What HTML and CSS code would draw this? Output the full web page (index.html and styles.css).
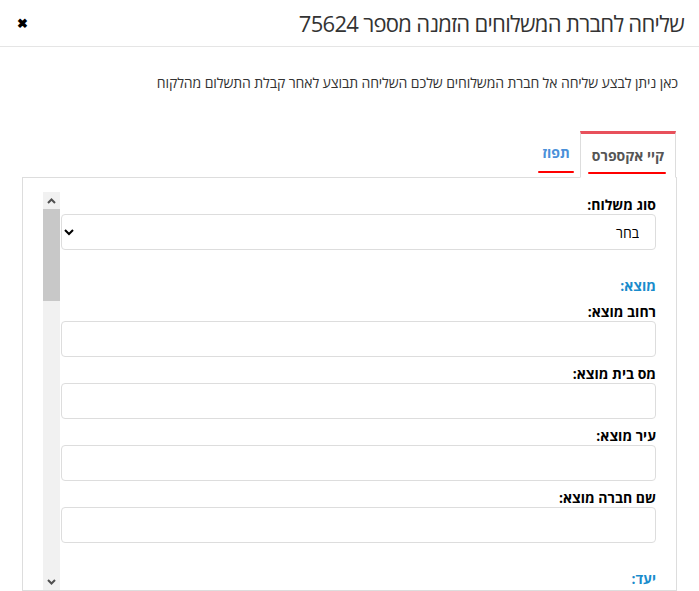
FILE: index.html
```html
<!DOCTYPE html>
<html lang="he" dir="rtl">
<head>
  <meta charset="UTF-8" />
  <meta name="viewport" content="width=device-width, initial-scale=1.0" />
  <title>שליחה לחברת המשלוחים</title>
  <link rel="stylesheet" href="styles.css">
</head>
<body>
  <div class="modal">
    <!-- כותרת -->
    <div class="modal-header">
      <h4 class="modal-title">שליחה לחברת המשלוחים הזמנה מספר 75624</h4>
      <button class="close" type="button">&#10006;</button>
    </div>

    <div class="modal-body">
      <p class="desc">כאן ניתן לבצע שליחה אל חברת המשלוחים שלכם השליחה תבוצע לאחר קבלת התשלום מהלקוח</p>

      <!-- טאבים -->
      <ul class="tabs">
        <li class="tab active"><span class="mark">קיי אקספרס</span></li>
        <li class="tab"><span class="mark mark-short">תפוז</span></li>
      </ul>

      <div class="tab-panel">
        <div class="scroll-box">
          <form class="ship-form">
            <div class="field">
              <label>סוג משלוח:</label>
              <select class="input">
                <option>בחר</option>
              </select>
            </div>

            <h5 class="section">מוצא:</h5>
            <div class="field">
              <label>רחוב מוצא:</label>
              <input class="input" type="text" />
            </div>
            <div class="field">
              <label>מס בית מוצא:</label>
              <input class="input" type="text" />
            </div>
            <div class="field">
              <label>עיר מוצא:</label>
              <input class="input" type="text" />
            </div>
            <div class="field">
              <label>שם חברה מוצא:</label>
              <input class="input" type="text" />
            </div>

            <h5 class="section">יעד:</h5>
          </form>

          <!-- פס גלילה -->
          <div class="scrollbar">
            <div class="sb-btn">
              <svg width="9" height="6" viewBox="0 0 9 6"><path d="M1 5l3.5-3.5L8 5" fill="none" stroke="#505050" stroke-width="2"/></svg>
            </div>
            <div class="sb-thumb"></div>
            <div class="sb-track"></div>
            <div class="sb-btn">
              <svg width="9" height="6" viewBox="0 0 9 6"><path d="M1 1l3.5 3.5L8 1" fill="none" stroke="#505050" stroke-width="2"/></svg>
            </div>
          </div>
        </div>
      </div>
    </div>
  </div>
</body>
</html>
```

FILE: styles.css
```css
html, body {
  margin: 0;
  height: 100%;
  overflow: hidden;
}

body {
  direction: rtl;
  font-family: "Open Sans", Arial, sans-serif;
  color: #333;
  background: #fff;
}

.modal-header {
  height: 46px;
  border-bottom: 1px solid #e5e5e5;
  display: flex;
  align-items: center;
  justify-content: space-between;
  padding: 0 15px 0 17px;
}

.modal-title {
  margin: 0;
  font-size: 22px;
  font-weight: normal;
  letter-spacing: -0.7px;
  color: #333;
}

.close {
  border: none;
  background: none;
  padding: 0;
  font-size: 13px;
  font-weight: bold;
  color: #000;
  cursor: pointer;
}

.modal-body {
  padding: 26px 22px 0 22px;
}

.desc {
  margin: 0 -1px 39px 0;
  font-size: 14px;
  letter-spacing: -0.1px;
  color: #333;
}

.tabs {
  list-style: none;
  margin: 0;
  padding: 0;
  display: flex;
  align-items: flex-end;
  height: 46px;
}

.tab {
  padding: 0 10px;
  font-size: 14px;
  font-weight: bold;
  color: #4a90d9;
  height: 20px;
  margin-bottom: 14px;
}

.tab.active {
  margin-right: 1px;
  margin-bottom: -1px;
  height: 43px;
  padding: 0 11px;
  border: 1px solid #ddd;
  border-top: 3px solid #e8505b;
  border-bottom-color: #fff;
  background: #fff;
  color: #555;
  display: flex;
  align-items: center;
  position: relative;
  z-index: 1;
}

.mark {
  position: relative;
}

.mark::after {
  content: "";
  position: absolute;
  right: -2px;
  left: -4px;
  bottom: -9px;
  height: 2px;
  border-radius: 1px;
  background: #f00;
}

.mark-short::after {
  right: -4px;
  bottom: -11px;
}

.tab-panel {
  border: 1px solid #ddd;
  padding: 14px 20px 0;
}

.scroll-box {
  height: 398px;
  display: flex;
  overflow: hidden;
}

.ship-form {
  flex: 1;
  margin-left: 1px;
  padding-top: 4px;
}

.scrollbar {
  width: 17px;
  flex: none;
  display: flex;
  flex-direction: column;
  background: #f1f1f1;
}

.sb-btn {
  height: 17px;
  display: flex;
  align-items: center;
  justify-content: center;
}

.sb-thumb {
  height: 92px;
  background: #c8c8c8;
}

.sb-track {
  flex: 1;
}

.field {
  margin-bottom: 8px;
}

.field label {
  display: block;
  line-height: 18px;
  font-size: 14px;
  font-weight: bold;
  color: #000;
}

.input {
  box-sizing: border-box;
  display: block;
  width: 100%;
  height: 36px;
  padding: 6px 12px;
  border: 1px solid #ddd;
  border-radius: 4px;
  font-family: "Open Sans", Arial, sans-serif;
  font-size: 14px;
  color: #000;
  background: #fff;
}

.section {
  margin: 27px 0 8px;
  line-height: 18px;
  font-size: 14px;
  font-weight: bold;
  color: #1a8ccc;
}
```
